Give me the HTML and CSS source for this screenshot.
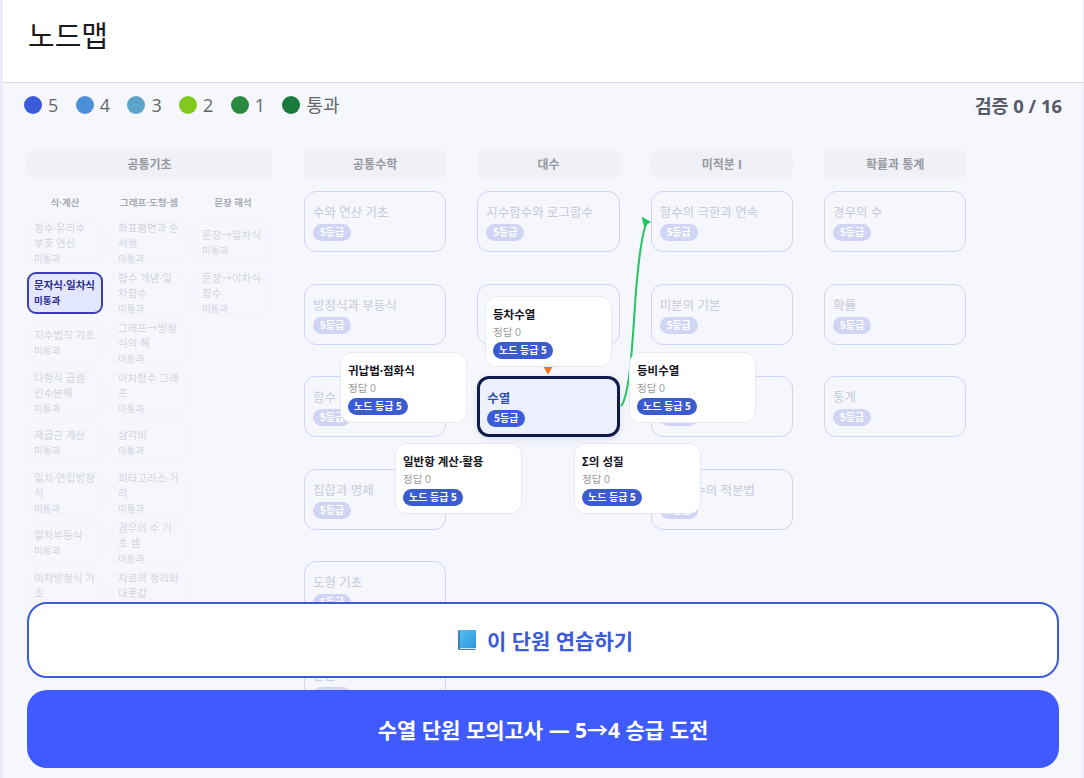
FILE: index.html
```html
<!DOCTYPE html>
<html lang="ko">
<head>
    <meta charset="UTF-8">
    <meta name="viewport" content="width=device-width, initial-scale=1.0">
    <title>노드맵</title>
    <link rel="stylesheet" href="styles.css">
</head>
<body>
    <div class="page">
        <div class="topbar"><h1>노드맵</h1></div>

        <div class="legend-row">
            <div class="legend">
                <span class="legend-item"><i class="dot dot-5"></i>5</span>
                <span class="legend-item"><i class="dot dot-4"></i>4</span>
                <span class="legend-item"><i class="dot dot-3"></i>3</span>
                <span class="legend-item"><i class="dot dot-2"></i>2</span>
                <span class="legend-item"><i class="dot dot-1"></i>1</span>
                <span class="legend-item"><i class="dot dot-pass"></i>통과</span>
            </div>
            <div class="verified">검증 0 / 16</div>
        </div>

        <div class="map">
            <!-- 공통기초 -->
            <div class="subject subject-wide">
                <div class="subject-title">공통기초</div>
                <div class="sub-grid">
                    <div class="sub-col">
                        <div class="sub-title">식·계산</div>
                        <div class="mini"><b>정수·유리수 부호 연산</b><span>미통과</span></div>
                        <div class="mini mini-active"><b>문자식·일차식</b><span>미통과</span></div>
                        <div class="mini"><b>지수법칙 기초</b><span>미통과</span></div>
                        <div class="mini"><b>다항식 곱셈·인수분해</b><span>미통과</span></div>
                        <div class="mini"><b>제곱근 계산</b><span>미통과</span></div>
                        <div class="mini"><b>일차·연립방정식</b><span>미통과</span></div>
                        <div class="mini"><b>일차부등식</b><span>미통과</span></div>
                        <div class="mini"><b>이차방정식 기초</b><span>미통과</span></div>
                    </div>
                    <div class="sub-col">
                        <div class="sub-title">그래프·도형·셈</div>
                        <div class="mini"><b>좌표평면과 순서쌍</b><span>미통과</span></div>
                        <div class="mini"><b>함수 개념·일차함수</b><span>미통과</span></div>
                        <div class="mini"><b>그래프→방정식의 해</b><span>미통과</span></div>
                        <div class="mini"><b>이차함수 그래프</b><span>미통과</span></div>
                        <div class="mini"><b>삼각비</b><span>미통과</span></div>
                        <div class="mini"><b>피타고라스·거리</b><span>미통과</span></div>
                        <div class="mini"><b>경우의 수 기초 셈</b><span>미통과</span></div>
                        <div class="mini"><b>자료의 정리와 대푯값</b><span>미통과</span></div>
                    </div>
                    <div class="sub-col">
                        <div class="sub-title">문장 해석</div>
                        <div class="mini"><b>문장→일차식</b><span>미통과</span></div>
                        <div class="mini"><b>문장→이차식·함수</b><span>미통과</span></div>
                    </div>
                </div>
            </div>

            <div class="subject">
                <div class="subject-title">공통수학</div>
                <div class="unit"><b>수와 연산 기초</b><span class="grade">5등급</span></div>
                <div class="unit"><b>방정식과 부등식</b><span class="grade">5등급</span></div>
                <div class="unit"><b>함수</b><span class="grade">5등급</span></div>
                <div class="unit"><b>집합과 명제</b><span class="grade">5등급</span></div>
                <div class="unit"><b>도형 기초</b><span class="grade">5등급</span></div>
                <div class="unit"><b>원론</b><span class="grade">5등급</span></div>
            </div>

            <div class="subject">
                <div class="subject-title">대수</div>
                <div class="unit"><b>지수함수와 로그함수</b><span class="grade">5등급</span></div>
                <div class="unit"><b>삼각함수</b><span class="grade">5등급</span></div>
                <div class="unit unit-current"><b>수열</b><span class="grade">5등급</span></div>
            </div>

            <div class="subject">
                <div class="subject-title">미적분 I</div>
                <div class="unit"><b>함수의 극한과 연속</b><span class="grade">5등급</span></div>
                <div class="unit"><b>미분의 기본</b><span class="grade">5등급</span></div>
                <div class="unit"><b>미분의 활용</b><span class="grade">5등급</span></div>
                <div class="unit"><b>다항함수의 적분법</b><span class="grade">5등급</span></div>
            </div>

            <div class="subject">
                <div class="subject-title">확률과 통계</div>
                <div class="unit"><b>경우의 수</b><span class="grade">5등급</span></div>
                <div class="unit"><b>확률</b><span class="grade">5등급</span></div>
                <div class="unit"><b>통계</b><span class="grade">5등급</span></div>
            </div>
        </div>

        <!-- 선수/후속 연결선 -->
        <svg class="links" width="1084" height="778" viewBox="0 0 1084 778">
            <path d="M621 406 C632 394 634 305 637 280 C639 258 641 238 646 224" fill="none" stroke="#22c55e" stroke-width="2"/>
            <polygon points="641.5,216.5 651,222 644,226.5" fill="#22c55e"/>
            <polygon points="543,366 553,366 548,374.5" fill="#f97316"/>
        </svg>

        <!-- 수열 주변 노드 -->
        <div class="pop pop-top"><b>등차수열</b><span>정답 0</span><em>노드 등급 5</em></div>
        <div class="pop pop-left"><b>귀납법·점화식</b><span>정답 0</span><em>노드 등급 5</em></div>
        <div class="pop pop-right"><b>등비수열</b><span>정답 0</span><em>노드 등급 5</em></div>
        <div class="pop pop-bl"><b>일반항 계산·활용</b><span>정답 0</span><em>노드 등급 5</em></div>
        <div class="pop pop-br"><b>Σ의 성질</b><span>정답 0</span><em>노드 등급 5</em></div>

        <div class="actions">
            <button class="btn btn-outline">
                <svg class="book" width="20" height="22" viewBox="0 0 20 22">
                    <defs>
                        <linearGradient id="cover" x1="0" y1="0" x2="1" y2="1">
                            <stop offset="0" stop-color="#55bff2"/>
                            <stop offset="1" stop-color="#2f96df"/>
                        </linearGradient>
                    </defs>
                    <rect x="1" y="1" width="18" height="20" rx="1.5" fill="#3f7fb8"/>
                    <rect x="3" y="1" width="16" height="18" fill="url(#cover)"/>
                    <rect x="3" y="19" width="16" height="1" fill="#dce9f2"/>
                </svg>
                이 단원 연습하기
            </button>
            <button class="btn btn-solid">수열 단원 모의고사 — 5→4 승급 도전</button>
        </div>
    </div>
</body>
</html>
```

FILE: styles.css
```css
* {
    margin: 0;
    padding: 0;
    box-sizing: border-box;
}

body {
    font-family: 'Open Sans', 'Noto Sans CJK KR', sans-serif;
    background: #e9ebf7;
    overflow: hidden;
}

.page {
    position: relative;
    width: 1084px;
    height: 778px;
    padding-left: 3px;
    padding-right: 1px;
    overflow: hidden;
}

.page::before {
    content: "";
    position: absolute;
    top: 0;
    bottom: 0;
    left: 3px;
    right: 1px;
    background: #f5f7fd;
}

.topbar {
    position: relative;
    height: 83px;
    background: #fff;
    border-bottom: 1px solid #d8dae0;
    padding: 16px 25px;
}

.topbar h1 {
    font-size: 29px;
    font-weight: 400;
    line-height: 40px;
    color: #1a1a1a;
}

.legend-row {
    position: relative;
    height: 66px;
    display: flex;
    justify-content: space-between;
    align-items: flex-start;
    padding: 10px 21px 0 21px;
}

.legend {
    display: flex;
    gap: 17.4px;
}

.legend-item {
    display: flex;
    align-items: center;
    gap: 6px;
    font-size: 18px;
    line-height: 24px;
    color: #666;
}

.dot {
    width: 18px;
    height: 18px;
    border-radius: 50%;
}

.dot-5 { background: #3b5bdb; }
.dot-4 { background: #4a90d9; }
.dot-3 { background: #5ba3c9; }
.dot-2 { background: #82c91e; }
.dot-1 { background: #2b8a3e; }
.dot-pass { background: #1a7a3a; }

.verified {
    font-size: 18.4px;
    line-height: 26px;
    font-weight: 700;
    color: #555a68;
}

.map {
    position: relative;
    display: flex;
    gap: 31px;
    padding-left: 24px;
    align-items: flex-start;
}

.subject {
    width: 142.33px;
    display: flex;
    flex-direction: column;
    gap: 31.5px;
    flex-shrink: 0;
}

.subject-wide {
    width: 245px;
    margin-right: 1px;
    gap: 0;
}

.subject-title {
    height: 30px;
    margin-bottom: -19.5px;
    background: #f0f1f7;
    border-radius: 8px;
    font-size: 12px;
    font-weight: 700;
    line-height: 31px;
    text-align: center;
    color: #96989f;
}

.subject-wide .subject-title {
    margin-bottom: 0;
}

.unit {
    height: 61px;
    border: 1.5px solid #cdd3f4;
    border-radius: 12px;
    padding: 12px 8px;
    display: flex;
    flex-direction: column;
    align-items: flex-start;
    gap: 2px;
}

.unit b {
    font-size: 12.5px;
    line-height: 18px;
    font-weight: 400;
    color: #c6c9dc;
}

.grade {
    height: 17px;
    padding: 0 7px;
    border-radius: 9px;
    background: #d0d5f5;
    font-size: 10px;
    font-weight: 700;
    line-height: 17px;
    color: #fff;
}

.unit-current {
    position: relative;
    border: 3px solid #101a4c;
    background: #edf1fe;
    box-shadow: 0 2px 8px rgba(30, 40, 90, 0.1);
    padding: 10.5px 7px;
}

.unit-current b {
    font-weight: 700;
    color: #3350b0;
}

.unit-current .grade {
    background: #3b5bdb;
}

.sub-grid {
    display: grid;
    grid-template-columns: repeat(3, 76px);
    gap: 8px;
    padding-top: 14px;
}

.sub-col {
    display: flex;
    flex-direction: column;
    gap: 8px;
}

.sub-title {
    height: 20px;
    margin-bottom: 1px;
    font-size: 9.5px;
    font-weight: 700;
    line-height: 20px;
    text-align: center;
    color: #a9abb4;
}

.mini {
    height: 42px;
    border: 1px solid #f1f2f9;
    border-radius: 9px;
    padding: 0 6px;
    display: flex;
    flex-direction: column;
    justify-content: center;
}

.mini b {
    flex-shrink: 0;
    font-size: 10.5px;
    line-height: 15.5px;
    font-weight: 400;
    color: #d2d4e0;
}

.mini span {
    flex-shrink: 0;
    font-size: 9.5px;
    line-height: 14px;
    color: #d2d4e0;
}

.mini-active {
    border: 2px solid #3d3db8;
    background: #e2e7fd;
    padding: 0 5px;
}

.mini-active b,
.mini-active span {
    font-weight: 700;
    color: #2c2c90;
}

.links {
    position: absolute;
    top: 0;
    left: 0;
    pointer-events: none;
}

.pop {
    position: absolute;
    width: 127px;
    height: 71px;
    background: #fff;
    border: 1px solid #e7e9f2;
    border-radius: 12px;
    padding: 9px 7px 0;
    display: flex;
    flex-direction: column;
    align-items: flex-start;
}

.pop b {
    font-size: 11.5px;
    line-height: 18px;
    font-weight: 700;
    color: #15151c;
}

.pop span {
    font-size: 10.5px;
    line-height: 16px;
    color: #999;
}

.pop em {
    margin-top: 2px;
    height: 17px;
    padding: 0 6px;
    border-radius: 9px;
    background: #3b5bd0;
    font-size: 10px;
    font-style: normal;
    font-weight: 700;
    line-height: 17px;
    color: #fff;
}

.pop-top { left: 485px; top: 296px; }
.pop-left { left: 340px; top: 352px; }
.pop-right { left: 629px; top: 352px; }
.pop-bl { left: 395px; top: 443px; }
.pop-br { left: 574px; top: 443px; }

.actions {
    position: absolute;
    left: 27px;
    right: 25px;
    bottom: 10px;
    display: flex;
    flex-direction: column;
    gap: 12px;
}

.btn {
    width: 100%;
    border-radius: 20px;
    font-family: inherit;
    font-size: 21px;
    font-weight: 700;
    display: flex;
    align-items: center;
    justify-content: center;
    gap: 10px;
}

.btn-outline {
    height: 76px;
    padding-left: 4px;
    background: #fff;
    border: 2px solid #3b5bdb;
    color: #3b5bdb;
}

.btn-solid {
    height: 78px;
    background: #3f5bff;
    border: 0;
    color: #fff;
}
```
